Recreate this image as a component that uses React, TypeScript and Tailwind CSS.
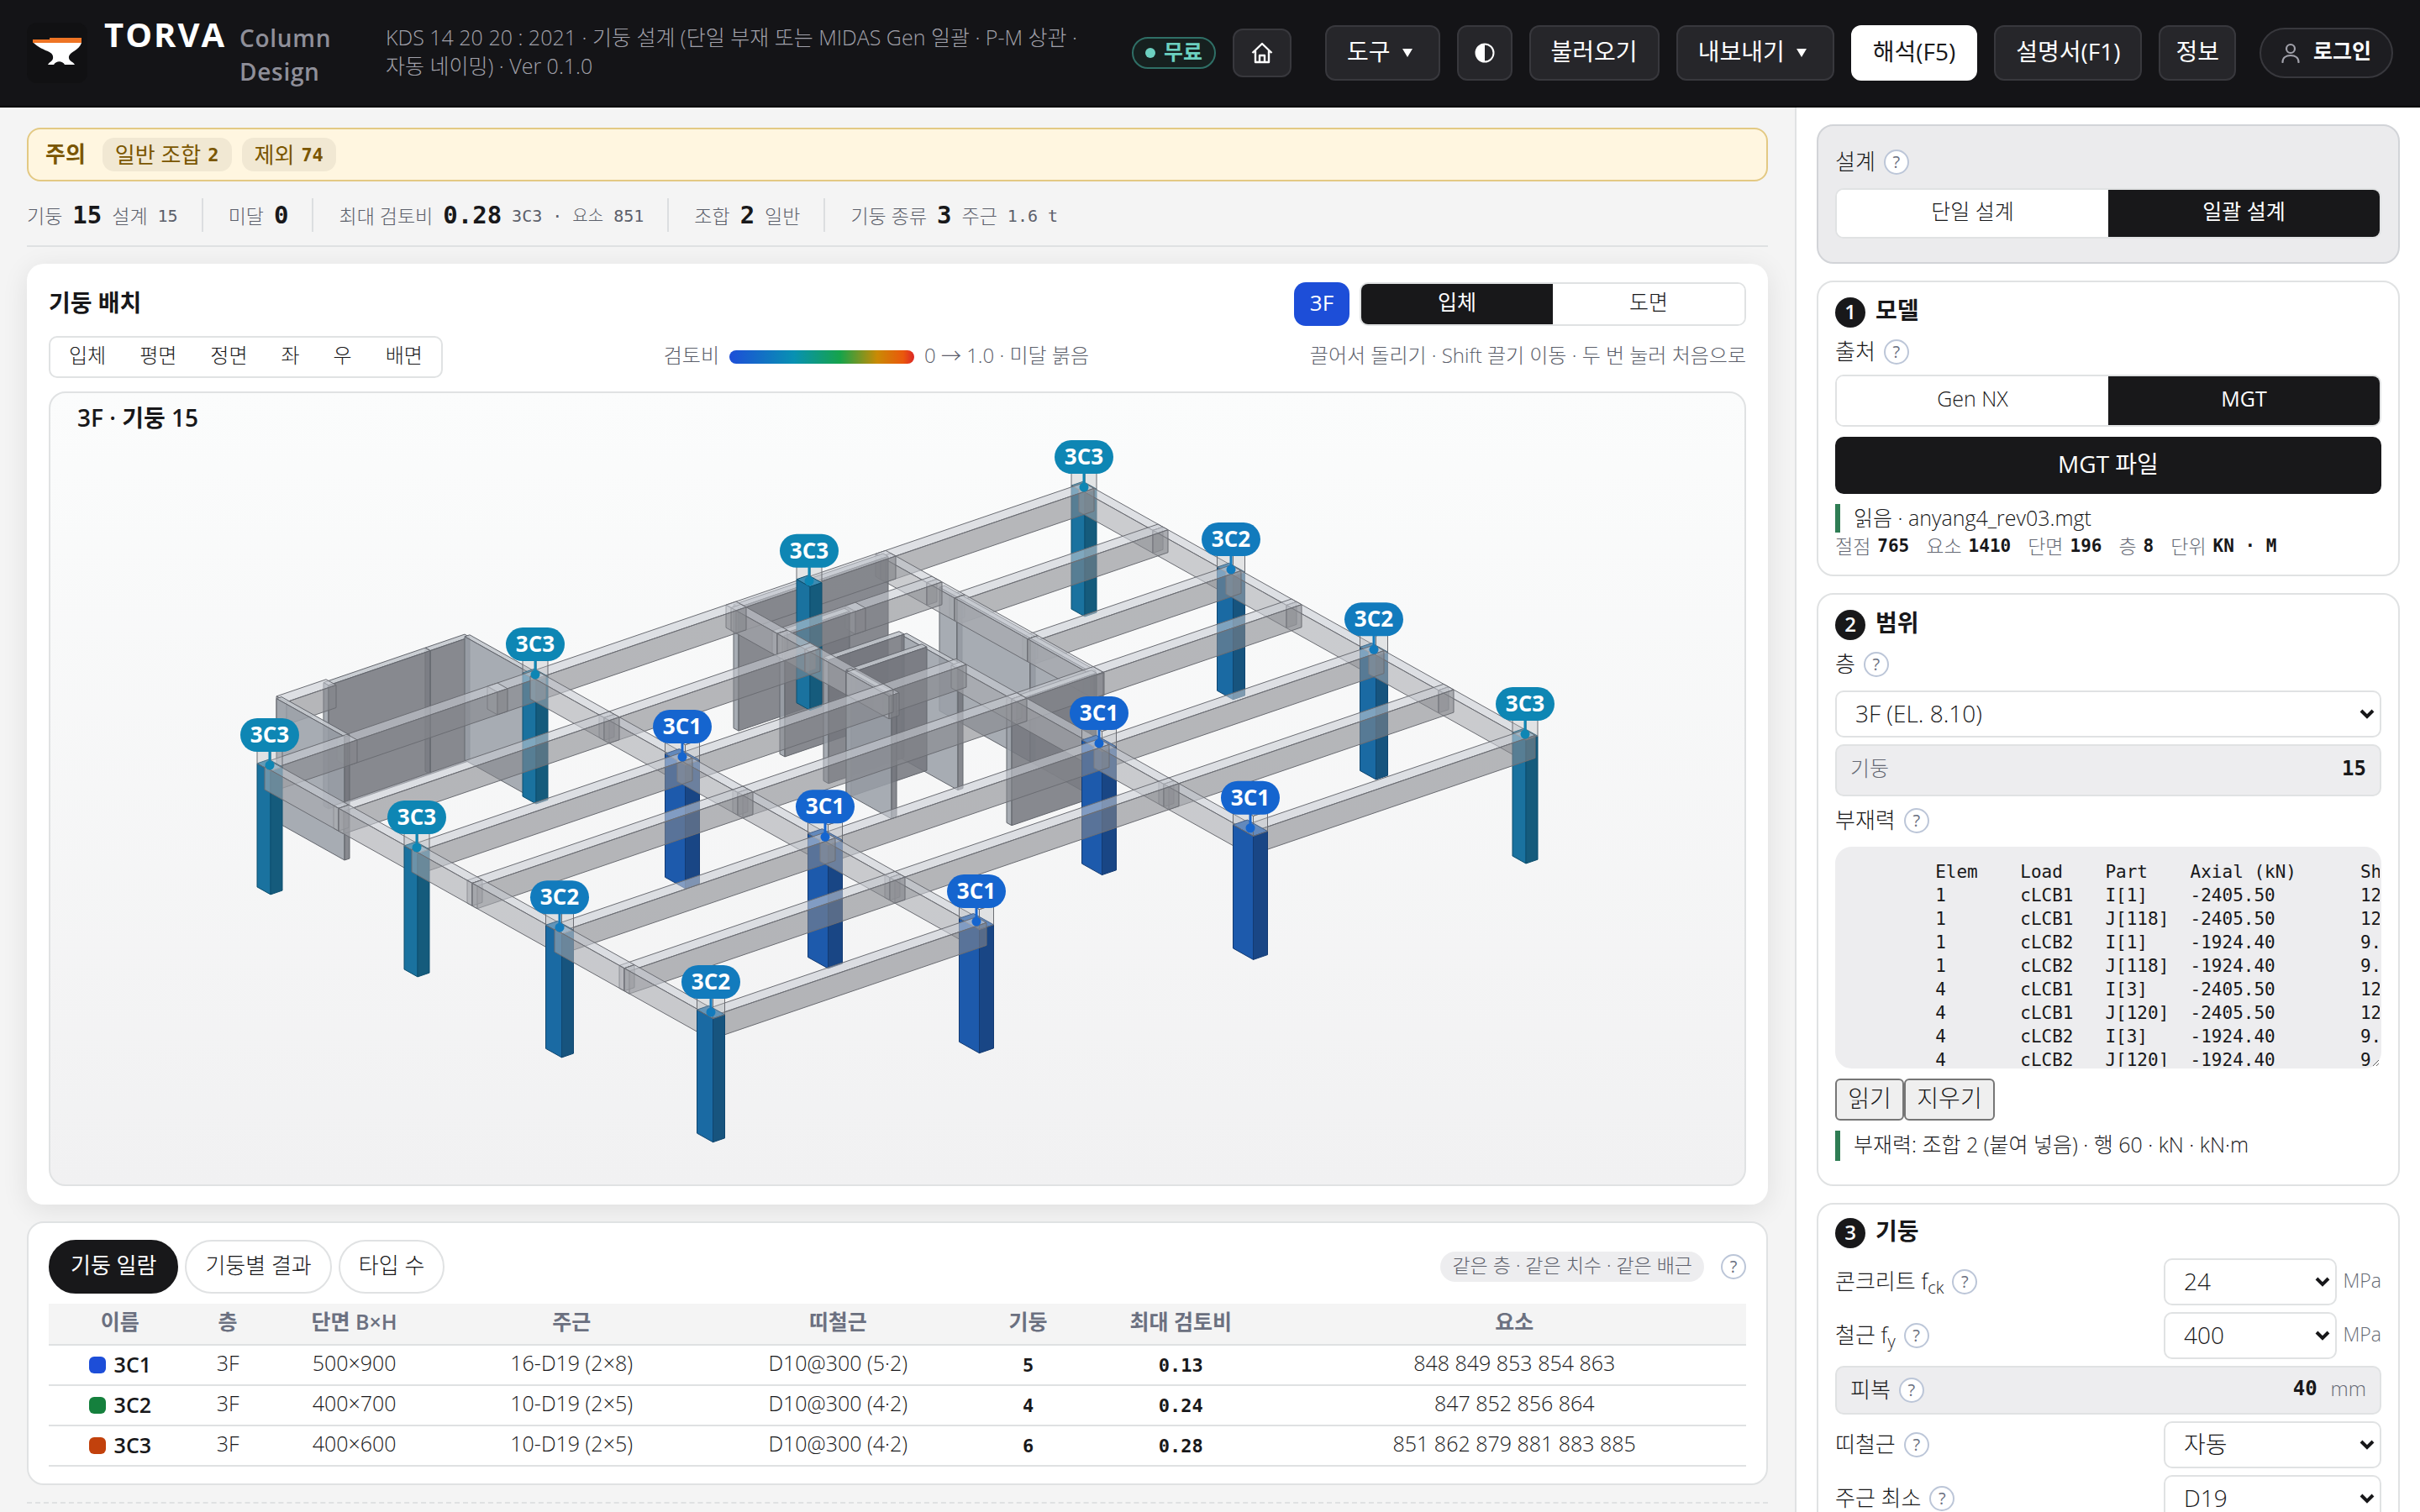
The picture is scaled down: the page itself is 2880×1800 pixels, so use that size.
import { ReactNode } from "react";

type Pt = [number, number];

interface Box {
  a: Pt;
  b: Pt;
  z: Pt;
  kind: "beam" | "wall" | "3C1" | "3C2" | "3C3" | "stub";
  lift?: number;
}

interface ColumnMark {
  type: "3C1" | "3C2" | "3C3";
  a: number;
  b: number;
  lift?: number;
}

const MONO = "font-['DejaVu_Sans_Mono','Noto_Sans_CJK_KR',monospace]";

const COLUMNS: ColumnMark[] = [
  { type: "3C3", a: 0, b: 0 },
  { type: "3C3", a: 0, b: 175 },
  { type: "3C2", a: 0, b: 345 },
  { type: "3C2", a: 0, b: 525 },
  { type: "3C3", a: 316, b: 0 },
  { type: "3C1", a: 316, b: 175 },
  { type: "3C1", a: 316, b: 345 },
  { type: "3C1", a: 316, b: 525 },
  { type: "3C3", a: 642, b: 0, lift: 105 },
  { type: "3C1", a: 642, b: 345 },
  { type: "3C1", a: 642, b: 525 },
  { type: "3C3", a: 969, b: 0 },
  { type: "3C2", a: 969, b: 175 },
  { type: "3C2", a: 969, b: 345 },
  { type: "3C3", a: 969, b: 525 },
];

const COLUMN_SIZE = {
  "3C1": { a: 17, b: 24 },
  "3C2": { a: 14, b: 19 },
  "3C3": { a: 14, b: 16 },
};

const TAG_COLOR = { "3C1": "#1565cf", "3C2": "#127bbd", "3C3": "#0e86b4" };

// faces: top, left (along b), right (along a)
const FACES = {
  beam: { top: "#c9cdd4", left: "#a8aab0", right: "#84868c", line: "#6b6d73", opacity: 0.58 },
  wall: { top: "#c3c7cd", left: "#9a9fa8", right: "#74777e", line: "#63666d", opacity: 0.86 },
  stub: { top: "#d4d6d9", left: "#b4b6ba", right: "#b4b6ba", line: "#6b6d73", opacity: 0.32 },
  "3C1": { top: "#3d73bd", left: "#1d5aac", right: "#194685", line: "#123a73", opacity: 1 },
  "3C2": { top: "#3d83b5", left: "#1a6aa3", right: "#17547e", line: "#0f4670", opacity: 1 },
  "3C3": { top: "#3d8cb3", left: "#1a729f", right: "#155b7c", line: "#0d4f6e", opacity: 1 },
};

// beams along a: [b, stops]
const BEAMS_A: [number, number[]][] = [
  [0, [0, 92, 271, 316, 555]],
  [0, [555, 642, 733, 969]],
  [88, [0, 316, 555]],
  [88, [733, 969]],
  [175, [0, 316, 555, 642]],
  [175, [733, 969]],
  [247, [0, 316, 642, 733, 969]],
  [345, [0, 316, 642, 969]],
  [428, [0, 316, 642, 969]],
  [525, [0, 316]],
  [525, [642, 969]],
  [55, [555, 642, 733]],
  [-82, [102, 149]],
];

// beams along b: [a, stops]
const BEAMS_B: [number, number[]][] = [
  [0, [0, 88, 175, 247, 345, 428, 525]],
  [316, [0, 88, 175, 247, 345, 428, 525]],
  [642, [175, 247, 345, 428, 525]],
  [969, [0, 88, 175, 247, 345, 428, 525]],
  [555, [0, 55, 88, 137, 188]],
  [733, [0, 55, 88, 175, 254]],
];

const WALLS: { a: Pt; b: Pt }[] = [
  { a: [149, 270], b: [-85, -79] },
  { a: [270, 317], b: [-85, -79] },
  { a: [93, 99], b: [-85, -4] },
  { a: [314, 320], b: [-82, 0] },
  { a: [555, 642], b: [-3, 3] },
  { a: [642, 733], b: [-3, 3] },
  { a: [730, 736], b: [67, 88] },
  { a: [730, 736], b: [88, 175] },
  { a: [730, 736], b: [175, 247] },
  { a: [555, 632], b: [52, 58] },
  { a: [552, 642], b: [107, 113] },
  { a: [552, 642], b: [134, 140] },
  { a: [552, 558], b: [134, 188] },
  { a: [639, 645], b: [113, 180] },
  { a: [632, 733], b: [245, 251] },
];

function buildModel(): Box[] {
  const boxes: Box[] = [];
  BEAMS_A.forEach(([b, stops]) => {
    for (let i = 0; i < stops.length - 1; i++) {
      boxes.push({ a: [stops[i] - 6, stops[i + 1] + 6], b: [b - 6, b + 6], z: [-27, 0], kind: "beam" });
    }
  });
  BEAMS_B.forEach(([a, stops]) => {
    for (let i = 0; i < stops.length - 1; i++) {
      boxes.push({ a: [a - 6, a + 6], b: [stops[i], stops[i + 1]], z: [-27, 0], kind: "beam" });
    }
  });
  WALLS.forEach((w) => boxes.push({ ...w, z: [-147, 0], kind: "wall" }));
  COLUMNS.forEach((c) => {
    const s = COLUMN_SIZE[c.type];
    const a: Pt = [c.a - s.a / 2, c.a + s.a / 2];
    const b: Pt = [c.b - s.b / 2, c.b + s.b / 2];
    boxes.push({ a, b, z: [-147, 0], kind: c.type, lift: c.lift });
    boxes.push({ a, b, z: [0, 24], kind: "stub" });
  });
  const depth = (k: Box) => {
    const front = k.kind === "beam" || k.kind === "stub" ? 12 : 0;
    return (k.b[0] + k.b[1] - k.a[0] - k.a[1]) / 2 + front + (k.lift ?? 0);
  };
  return boxes.sort((p, q) => depth(p) - depth(q));
}

function project(a: number, b: number, z: number): Pt {
  return [321 + a + b, 911 - 0.3415 * a + 0.56 * b - z];
}

function points(list: Pt[]) {
  return list.map((p) => p.map((n) => Math.round(n * 10) / 10).join(",")).join(" ");
}

function Solid({ box }: { box: Box }) {
  const { a, b, z } = box;
  const f = FACES[box.kind];
  const top = [project(a[0], b[0], z[1]), project(a[1], b[0], z[1]), project(a[1], b[1], z[1]), project(a[0], b[1], z[1])];
  const left = [project(a[0], b[0], z[1]), project(a[0], b[1], z[1]), project(a[0], b[1], z[0]), project(a[0], b[0], z[0])];
  const right = [project(a[0], b[1], z[1]), project(a[1], b[1], z[1]), project(a[1], b[1], z[0]), project(a[0], b[1], z[0])];
  return (
    <g stroke={f.line} strokeWidth="1" strokeLinejoin="round" fillOpacity={f.opacity}>
      <polygon points={points(top)} fill={f.top} />
      <polygon points={points(left)} fill={f.left} />
      <polygon points={points(right)} fill={f.right} />
    </g>
  );
}

function FrameView() {
  return (
    <svg viewBox="60 468 2016 942" className="block h-auto w-full" role="img" aria-label="3F 기둥 배치">
      {buildModel().map((box, i) => (
        <Solid key={i} box={box} />
      ))}
      {COLUMNS.map((c, i) => {
        const [x, y] = project(c.a, c.b, 0);
        return (
          <g key={i} fill={TAG_COLOR[c.type]}>
            <rect x={x - 1.5} y={y - 20} width="3" height="20" />
            <circle cx={x} cy={y} r="5.5" />
            <rect x={x - 35} y={y - 56} width="70" height="40" rx="20" />
            <text x={x} y={y - 27} textAnchor="middle" fontSize="26" fontWeight="700" fill="#ffffff">
              {c.type}
            </text>
          </g>
        );
      })}
    </svg>
  );
}

function Help() {
  return (
    <button
      type="button"
      aria-label="도움말"
      className="flex size-[30px] shrink-0 items-center justify-center rounded-full border-2 border-[#bcc6d8] bg-white text-[20px] leading-none font-normal text-[#6b7080]"
    >
      ?
    </button>
  );
}

function Chevron() {
  return (
    <svg viewBox="0 0 18 12" className="pointer-events-none absolute top-1/2 right-2 h-3 w-[18px] -translate-y-1/2" fill="none" stroke="#18181a" strokeWidth="4">
      <path d="M2 2l7 7 7-7" />
    </svg>
  );
}

function SelectBox({ id, value }: { id: string; value: string }) {
  return (
    <div className="relative flex-1">
      <select id={id} className="h-14 w-full appearance-none rounded-[10px] border-2 border-[#e0e2e3] bg-white pb-0.5 pl-[22px] text-[28px]">
        <option>{value}</option>
      </select>
      <Chevron />
    </div>
  );
}

function Segment({ items, active, className }: { items: string[]; active: number; className: string }) {
  return (
    <div className={"flex overflow-hidden rounded-[10px] border-2 border-[#e0e2e3] bg-white " + className}>
      {items.map((item, i) => (
        <button key={item} type="button" className={i === active ? "flex-1 bg-[#18181a] pb-1 font-normal text-white" : "flex-1 bg-white pb-1"}>
          {item}
        </button>
      ))}
    </div>
  );
}

function ToolButton({ children, primary, tight }: { children: ReactNode; primary?: boolean; tight?: boolean }) {
  return (
    <button
      type="button"
      className={
        "flex h-[66px] shrink-0 items-center gap-[14px] rounded-xl border-2 pb-1 text-[28px] font-normal whitespace-nowrap " +
        (tight ? "px-[18px] " : "px-6 ") +
        (primary ? "border-white bg-white text-[#18181a]" : "border-[#38383d] bg-[#26262a] text-white")
      }
    >
      {children}
    </button>
  );
}

function Caret() {
  return (
    <svg viewBox="0 0 12 10" className="mt-1 mr-[7px] h-[10px] w-3" fill="currentColor">
      <path d="M0 0h12L6 10z" />
    </svg>
  );
}

function Header() {
  return (
    <header className="flex h-32 shrink-0 items-center border-b-2 border-black bg-[#141417] px-8 text-white">
      <svg viewBox="0 0 72 72" className="size-[72px] shrink-0">
        <rect width="72" height="72" rx="12" fill="#111113" />
        <path d="M7 20H27V18H65V24H7z" fill="#ee7424" />
        <path d="M8 24H65C62 33 52 34 50 40C49 46 55 46 57 50H45C42 45 35 45 32 50H25C27 46 32 46 31 40C30 33 18 34 8 24z" fill="#ffffff" />
      </svg>
      <div className="ml-5 flex shrink-0 items-baseline gap-4">
        <h1 className="text-[40px] leading-10 font-bold tracking-wider">TORVA</h1>
        <p className="w-[134px] text-[28px] leading-10 font-semibold tracking-wide text-[#8f8f99]">Column Design</p>
      </div>
      <p className="ml-10 min-w-0 flex-1 pr-10 pb-1 text-[25px] leading-[34px] break-keep text-[#a1a1aa]">
        KDS 14 20 20 : 2021 · 기둥 설계 (단일 부재 또는 MIDAS Gen 일괄 · P-M 상관 · 자동 네이밍) · Ver 0.1.0
      </p>
      <div className="flex shrink-0 items-center gap-5">
        <span className="flex h-[38px] items-center gap-[10px] rounded-full border-2 border-[#2f6f66] bg-[#16201f] px-[14px] text-[25px] font-semibold text-[#6cd0c0]">
          <span className="size-3 rounded-full bg-[#6cd0c0]" />
          <span className="pb-0.5">무료</span>
        </span>
        <button type="button" aria-label="홈" className="mr-5 flex h-[58px] w-[70px] items-center justify-center rounded-xl border-2 border-[#38383d] bg-[#26262a]">
          <svg viewBox="0 0 26 26" className="size-[26px]" fill="none" stroke="#ffffff" strokeWidth="2.4" strokeLinejoin="round">
            <path d="M1.5 13L13 2l11.500 11M5 10.500V24h16V10.500M10 24v-8h6v8" />
          </svg>
        </button>
        <ToolButton>
          도구
          <Caret />
        </ToolButton>
        <button type="button" aria-label="테마" className="flex h-[66px] w-[66px] items-center justify-center rounded-xl border-2 border-[#38383d] bg-[#26262a]">
          <svg viewBox="0 0 24 24" className="size-6">
            <circle cx="12" cy="12" r="10.500" fill="none" stroke="#ffffff" strokeWidth="2" />
            <path d="M12 1.500a10.500 10.500 0 000 21z" fill="#ffffff" />
          </svg>
        </button>
        <ToolButton>불러오기</ToolButton>
        <ToolButton>
          내보내기
          <Caret />
        </ToolButton>
        <ToolButton primary>해석(F5)</ToolButton>
        <ToolButton>설명서(F1)</ToolButton>
        <ToolButton tight>정보</ToolButton>
        <button type="button" className="ml-2 flex h-[60px] items-center gap-4 rounded-full border-2 border-[#38383d] bg-[#1d1d21] px-6 text-[25px] font-semibold">
          <svg viewBox="0 0 22 24" className="h-6 w-[22px]" fill="none" stroke="#a1a1aa" strokeWidth="2.200" strokeLinecap="round">
            <circle cx="11" cy="7" r="5" />
            <path d="M1.500 23c0-5 4-8 9.500-8s9.500 3 9.500 8" />
          </svg>
          <span className="pb-1">로그인</span>
        </button>
      </div>
    </header>
  );
}

function Stat({ label, value, unit, extra, last }: { label: string; value: string; unit?: string; extra?: ReactNode; last?: boolean }) {
  return (
    <div className={last ? "flex h-10 items-center gap-3 pt-0.5" : "mr-[30px] flex h-10 items-center gap-3 border-r-2 border-[#dcdee0] pt-0.5 pr-7"}>
      <span>{label}</span>
      <b className={"text-[29px] font-bold text-[#18181a] " + MONO}>{value}</b>
      {unit && <span>{unit}</span>}
      {extra && <span className={"text-[20px] " + MONO}>{extra}</span>}
    </div>
  );
}

const VIEWS = ["입체", "평면", "정면", "좌", "우", "배면"];

const TYPES = [
  { name: "3C1", color: "bg-[#1d4ed8]", section: "500×900", main: "16-D19 (2×8)", hoop: "D10@300 (5·2)", count: 5, ratio: "0.13", elems: "848 849 853 854 863" },
  { name: "3C2", color: "bg-[#15803d]", section: "400×700", main: "10-D19 (2×5)", hoop: "D10@300 (4·2)", count: 4, ratio: "0.24", elems: "847 852 856 864" },
  { name: "3C3", color: "bg-[#c2410c]", section: "400×600", main: "10-D19 (2×5)", hoop: "D10@300 (4·2)", count: 6, ratio: "0.28", elems: "851 862 879 881 883 885" },
];

function LayoutCard() {
  return (
    <section className="mt-5 rounded-[20px] bg-white px-[26px] py-[22px] shadow-[0_6px_32px_rgba(0,0,0,0.09)]">
      <div className="flex items-center justify-between">
        <h2 className="pb-1 text-[28px] font-semibold">기둥 배치</h2>
        <div className="flex gap-3">
          <button type="button" className="h-[52px] w-[66px] rounded-[14px] bg-[#1d4ed8] pb-1 text-[26px] font-normal text-white">
            3F
          </button>
          <Segment items={["입체", "도면"]} active={0} className="h-[52px] w-[460px] text-[25px]" />
        </div>
      </div>
      <div className="mt-3 flex items-center justify-between text-[24px] text-[#5c606b]">
        <div className="flex h-[50px] rounded-[10px] border-2 border-[#e0e2e3] p-0.5 text-[#18181a]">
          {VIEWS.map((v) => (
            <button key={v} type="button" className="px-5 pb-1">
              {v}
            </button>
          ))}
        </div>
        <div className="flex items-center gap-3">
          <span className="pb-1">검토비</span>
          <span className="h-4 w-[220px] rounded-full bg-[linear-gradient(90deg,#1d4ed8_0%,#0891b2_35%,#16a34a_60%,#ca8a04_80%,#ea580c_94%,#dc2626_100%)]" />
          <span className="pb-1">0 → 1.0 · 미달 붉음</span>
        </div>
        <p className="pb-1">끌어서 돌리기 · Shift 끌기 이동 · 두 번 눌러 처음으로</p>
      </div>
      <div className="relative mt-4 rounded-[20px] border-2 border-[#e0e2e3] bg-linear-to-b from-[#fbfcfc] to-[#f1f1f2]">
        <FrameView />
        <h3 className="absolute top-2 left-8 text-[28px] font-semibold">3F · 기둥 15</h3>
      </div>
    </section>
  );
}

function TableCard() {
  return (
    <section className="mt-5 rounded-[20px] border-2 border-[#e0e2e3] bg-white px-6 py-5">
      <div className="flex items-center gap-2 text-[26px]">
        <button type="button" className="h-16 rounded-full border-2 border-[#18181a] bg-[#18181a] px-6 pb-1 font-normal text-white">
          기둥 일람
        </button>
        <button type="button" className="h-16 rounded-full border-2 border-[#e0e2e3] px-[22px] pb-1">
          기둥별 결과
        </button>
        <button type="button" className="h-16 rounded-full border-2 border-[#e0e2e3] px-[22px] pb-1">
          타입 수
        </button>
        <span className="mr-3 ml-auto flex h-9 items-center rounded-full bg-[#ededef] px-[14px] pb-1 text-[23px] text-[#5c606b]">같은 층 · 같은 치수 · 같은 배근</span>
        <Help />
      </div>
      <table className="mt-3 w-full table-fixed border-collapse text-center text-[25px]">
        <thead>
          <tr className="h-[49px] border-b-2 border-[#dfe1e2] bg-[#f4f4f4] text-[#6b7080]">
            <th className="w-[8.4%] pb-1 font-semibold">이름</th>
            <th className="w-[4.3%] pb-1 font-semibold">층</th>
            <th className="w-[10.6%] pb-1 font-semibold">단면 B×H</th>
            <th className="w-[15%] pb-1 font-semibold">주근</th>
            <th className="w-[16.4%] pb-1 font-semibold">띠철근</th>
            <th className="w-[6%] pb-1 font-semibold">기둥</th>
            <th className="w-[12%] pb-1 font-semibold">최대 검토비</th>
            <th className="pb-1 font-semibold">요소</th>
          </tr>
        </thead>
        <tbody>
          {TYPES.map((t) => (
            <tr key={t.name} className="h-12 border-b-2 border-[#dfe1e2]">
              <td>
                <div className="flex items-center justify-center gap-[10px] font-semibold">
                  <span className={"size-5 rounded-md " + t.color} />
                  {t.name}
                </div>
              </td>
              <td className="pb-1">3F</td>
              <td className="pb-1">{t.section}</td>
              <td className="pb-1">{t.main}</td>
              <td className="pb-1">{t.hoop}</td>
              <td className={"text-[22px] font-bold " + MONO}>{t.count}</td>
              <td className={"text-[22px] font-bold " + MONO}>{t.ratio}</td>
              <td className="pb-1">{t.elems}</td>
            </tr>
          ))}
        </tbody>
      </table>
    </section>
  );
}

function StepTitle({ no, title }: { no: number; title: string }) {
  return (
    <h2 className="flex h-9 items-center gap-3 text-[28px] font-semibold">
      <span className="flex size-9 items-center justify-center rounded-full bg-[#18181a] pb-0.5 text-[24px] text-white">{no}</span>
      <span className="pb-1.5">{title}</span>
    </h2>
  );
}

function FieldLabel({ text, htmlFor }: { text: ReactNode; htmlFor?: string }) {
  return (
    <div className="flex h-[30px] items-center gap-[10px] text-[26px] leading-none">
      <label htmlFor={htmlFor} className="pb-0.5">
        {text}
      </label>
      <Help />
    </div>
  );
}

function FieldRow({ id, text, value, unit }: { id: string; text: ReactNode; value: string; unit?: string }) {
  return (
    <div className="mt-2 flex items-center">
      <div className="flex-1">
        <FieldLabel text={text} htmlFor={id} />
      </div>
      <div className="flex w-[259px] items-center gap-2">
        <SelectBox id={id} value={value} />
        {unit && <span className="pb-1 text-[23px] text-[#666a75]">{unit}</span>}
      </div>
    </div>
  );
}

const MODEL_STATS = [
  ["절점", "765"],
  ["요소", "1410"],
  ["단면", "196"],
  ["층", "8"],
  ["단위", "KN · M"],
];

const FORCES = [
  "\tElem\tLoad\tPart\tAxial (kN)\tShear-y (kN)",
  "\t1\tcLCB1\tI[1]\t-2405.50\t12.10",
  "\t1\tcLCB1\tJ[118]\t-2405.50\t12.10",
  "\t1\tcLCB2\tI[1]\t-1924.40\t9.68",
  "\t1\tcLCB2\tJ[118]\t-1924.40\t9.68",
  "\t4\tcLCB1\tI[3]\t-2405.50\t12.10",
  "\t4\tcLCB1\tJ[120]\t-2405.50\t12.10",
  "\t4\tcLCB2\tI[3]\t-1924.40\t9.68",
  "\t4\tcLCB2\tJ[120]\t-1924.40\t9.68",
].join("\n");

function Sidebar() {
  return (
    <aside className="flex w-[744px] shrink-0 flex-col gap-5 overflow-hidden border-l-2 border-[#e0e2e3] bg-white px-6 py-5 *:shrink-0">
      <section className="rounded-[20px] border-2 border-[#d2d4d8] bg-[#ebebed] px-5 py-7">
        <FieldLabel text="설계" />
        <Segment items={["단일 설계", "일괄 설계"]} active={1} className="mt-4 h-[60px] text-[25px]" />
      </section>

      <section className="rounded-[20px] border-2 border-[#e0e2e3] px-5 pt-[18px] pb-4">
        <StepTitle no={1} title="모델" />
        <div className="mt-[14px]">
          <FieldLabel text="출처" />
        </div>
        <Segment items={["Gen NX", "MGT"]} active={1} className="mt-3 h-[62px] text-[25px]" />
        <button type="button" className="mt-3 h-[68px] w-full rounded-[10px] bg-[#18181a] pb-1 text-[28px] font-normal text-white">
          MGT 파일
        </button>
        <p className="mt-3 h-[34px] border-l-6 border-[#2f7d54] pl-4 text-[25px] leading-8">읽음 · anyang4_rev03.mgt</p>
        <dl className="flex h-[34px] gap-5 text-[23px] leading-8 text-[#666a75]">
          {MODEL_STATS.map(([k, v]) => (
            <div key={k} className="flex gap-2">
              <dt>{k}</dt>
              <dd className={"text-[21px] font-bold text-[#18181a] " + MONO}>{v}</dd>
            </div>
          ))}
        </dl>
      </section>

      <section className="rounded-[20px] border-2 border-[#e0e2e3] px-5 pt-[18px] pb-7">
        <StepTitle no={2} title="범위" />
        <div className="mt-[14px]">
          <FieldLabel text="층" htmlFor="story" />
        </div>
        <div className="mt-4 flex">
          <SelectBox id="story" value="3F (EL. 8.10)" />
        </div>
        <div className="mt-2 flex h-[62px] items-center justify-between rounded-[10px] border-2 border-[#e0e2e3] bg-[#ededef] px-4 pb-1 text-[25px] text-[#666a75]">
          <span>기둥</span>
          <b className={"text-[24px] font-bold text-[#18181a] " + MONO}>15</b>
        </div>
        <div className="mt-[14px]">
          <FieldLabel text="부재력" htmlFor="forces" />
        </div>
        <textarea
          id="forces"
          readOnly
          wrap="off"
          defaultValue={FORCES}
          className={"mt-4 block h-[264px] w-full overflow-hidden rounded-[20px] border-2 border-[#ededef] bg-[#ededef] px-4 pt-[14px] text-[21px] leading-7 whitespace-pre [tab-size:8] " + MONO}
        />
        <div className="mt-3 flex text-[28px]">
          <button type="button" className="h-[50px] w-[82px] rounded-md border-2 border-[#767676] bg-[#efefef] pb-1 leading-none">
            읽기
          </button>
          <button type="button" className="h-[50px] w-[108px] rounded-md border-2 border-[#767676] bg-[#efefef] pb-1 leading-none">
            지우기
          </button>
        </div>
        <p className="mt-3 h-9 border-l-6 border-[#2f7d54] pl-4 text-[25px] leading-8">부재력: 조합 2 (붙여 넣음) · 행 60 · kN · kN·m</p>
      </section>

      <section className="rounded-[20px] border-2 border-[#e0e2e3] px-5 py-4">
        <StepTitle no={3} title="기둥" />
        <div className="pt-1">
          <FieldRow
            id="fck"
            text={
              <>
                콘크리트 f<sub className="text-[20px]">ck</sub>
              </>
            }
            value="24"
            unit="MPa"
          />
        </div>
        <FieldRow
          id="fy"
          text={
            <>
              철근 f<sub className="text-[20px]">y</sub>
            </>
          }
          value="400"
          unit="MPa"
        />
        <div className="mt-2 flex h-[58px] items-center justify-between rounded-[10px] border-2 border-[#e0e2e3] bg-[#ededef] px-4">
          <FieldLabel text="피복" />
          <div className="flex items-center gap-4 pb-1 text-[24px] text-[#666a75]">
            <b className={"text-[24px] font-bold text-[#18181a] " + MONO}>40</b>
            mm
          </div>
        </div>
        <FieldRow id="hoop" text="띠철근" value="자동" />
        <FieldRow id="bar" text="주근 최소" value="D19" />
      </section>
    </aside>
  );
}

export default function App() {
  return (
    <div className="flex h-screen flex-col overflow-hidden bg-[#f4f4f4] font-['Open_Sans','Noto_Sans_CJK_KR',sans-serif] font-light text-[#18181a]">
      <Header />
      <div className="flex min-h-0 flex-1">
        <main className="min-w-0 flex-1 overflow-hidden px-8 pt-6">
          <div className="flex h-16 items-center gap-3 rounded-2xl border-2 border-[#e3c983] bg-[#fff6e0] px-5 text-[26px] text-[#7a5600]">
            <b className="mr-2 pb-0.5 font-semibold">주의</b>
            <span className="flex h-10 items-center gap-2 rounded-[14px] bg-[#f1e8d3] px-[15px] font-normal">
              일반 조합 <b className={"text-[22px] font-bold " + MONO}>2</b>
            </span>
            <span className="flex h-10 items-center gap-2 rounded-[14px] bg-[#f1e8d3] px-[15px] font-normal">
              제외 <b className={"text-[22px] font-bold " + MONO}>74</b>
            </span>
          </div>
          <div className="flex border-b-2 border-[#dfe1e2] pt-5 pb-4 text-[23px] whitespace-nowrap text-[#5c606b]">
            <Stat label="기둥" value="15" unit="설계" extra="15" />
            <Stat label="미달" value="0" />
            <Stat label="최대 검토비" value="0.28" extra="3C3 · 요소 851" />
            <Stat label="조합" value="2" unit="일반" />
            <Stat label="기둥 종류" value="3" unit="주근" extra="1.6 t" last />
          </div>
          <LayoutCard />
          <TableCard />
          <div className="mt-5 border-t-2 border-dashed border-[#dfe1e2]" />
        </main>
        <Sidebar />
      </div>
    </div>
  );
}
